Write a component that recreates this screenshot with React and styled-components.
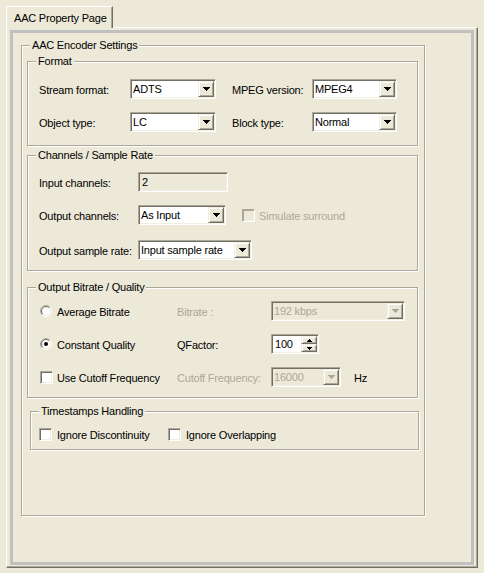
import React from 'react';
import styled, { createGlobalStyle, css } from 'styled-components';

const FACE = '#ECE9D8';
const LIGHT = '#F1EFE2';
const SHADOW = '#ACA899';
const DARK = '#716F64';
const DISABLED = '#ACA899';

const Global = createGlobalStyle`
  html, body { margin: 0; padding: 0; background: ${FACE}; }
  body { font-family: "Liberation Sans", Arial, sans-serif; font-size: 11px; letter-spacing: -0.2px; color: #000; }
  * { box-sizing: border-box; }
`;

const sunken = css`
  border: 1px solid;
  border-color: ${SHADOW} #ffffff #ffffff ${SHADOW};
  box-shadow: inset 1px 1px ${DARK}, inset -1px -1px ${LIGHT};
`;

const raised = css`
  border: 1px solid;
  border-color: ${LIGHT} ${DARK} ${DARK} ${LIGHT};
  box-shadow: inset 1px 1px #ffffff, inset -1px -1px ${SHADOW};
`;

const Page = styled.div`
  width: 484px;
  height: 573px;
  padding: 6px 0 0 6px;
`;

const TabStrip = styled.div`
  display: flex;
  height: 22px;
  margin-bottom: -1px;
  position: relative;
  z-index: 1;
`;

const Tab = styled.div`
  width: 107px;
  height: 22px;
  padding-left: 7px;
  display: flex;
  align-items: center;
  background: ${FACE};
  border-left: 1px solid #ffffff;
  border-top: 1px solid #ffffff;
  border-right: 1px solid ${DARK};
  box-shadow: inset -1px 0 ${SHADOW};
  white-space: nowrap;
`;

const Panel = styled.div`
  width: 472px;
  height: 541px;
  display: flex;
  flex-direction: column;
  border-style: solid;
  border-width: 1px;
  border-color: #ffffff ${DARK} ${DARK} #ffffff;
  box-shadow: inset -1px -1px ${SHADOW};
  padding: 2px 3px 2px 3px;
`;

const Frame = styled.div`
  flex: 1;
  border: 3px solid #c0c0c0;
  padding: 12px 0 0 8px;
`;

const GroupBox = styled.div`
  position: relative;
  flex: none;
  height: ${(p) => p.$h}px;
  margin: ${(p) => p.$m || '0'};
  padding: ${(p) => p.$pad || '0'};
  border: 1px solid ${SHADOW};
  box-shadow: inset 1px 1px #ffffff, 1px 1px #ffffff;
  display: flex;
  flex-direction: column;
  gap: ${(p) => p.$gap || 0}px;
`;

const MainGroup = styled(GroupBox)`
  width: 404px;
`;

const Caption = styled.span`
  position: absolute;
  top: -7px;
  left: 8px;
  padding: 0 2px;
  line-height: 13px;
  background: ${FACE};
  white-space: nowrap;
`;

const Row = styled.div`
  display: flex;
  align-items: center;
  height: ${(p) => p.$h || 20}px;
  margin-top: ${(p) => p.$mt || 0}px;
`;

const Label = styled.span`
  flex: none;
  width: ${(p) => (p.$w ? `${p.$w}px` : 'auto')};
  margin-left: ${(p) => p.$ml || 0}px;
  padding-top: 1px;
  color: ${(p) => (p.$disabled ? DISABLED : '#000')};
  white-space: nowrap;
`;

const Box = styled.div`
  flex: none;
  width: ${(p) => p.$w}px;
  height: 20px;
  display: flex;
  align-items: stretch;
  padding: 1px;
  ${sunken};
  background: ${(p) => (p.$face ? FACE : '#ffffff')};
  color: ${(p) => (p.$disabled ? DISABLED : '#000')};
`;

const BoxText = styled.span`
  flex: 1;
  display: flex;
  align-items: center;
  padding-left: ${(p) => p.$pl || 1}px;
  white-space: nowrap;
  overflow: hidden;
`;

const DropButton = styled.div`
  flex: none;
  width: 16px;
  ${raised};
  background: ${FACE};
  display: flex;
  align-items: center;
  justify-content: center;
  color: ${(p) => (p.$disabled ? DISABLED : '#000')};
`;

const SpinColumn = styled.div`
  flex: none;
  width: 16px;
  display: flex;
  flex-direction: column;
`;

const SpinButton = styled.div`
  flex: 1;
  ${raised};
  background: ${FACE};
  display: flex;
  align-items: center;
  justify-content: center;
`;

const Check = styled.span`
  flex: none;
  width: 13px;
  height: 13px;
  ${sunken};
  background: ${(p) => (p.$disabled ? FACE : '#ffffff')};
  ${(p) =>
    p.$disabled &&
    css`
      border-color: ${SHADOW} #ffffff #ffffff ${SHADOW};
      box-shadow: inset 1px 1px ${SHADOW}, inset -1px -1px ${LIGHT};
    `}
`;

const Option = styled.label`
  flex: none;
  display: flex;
  align-items: center;
  gap: ${(p) => p.$gap || 4}px;
  width: ${(p) => (p.$w ? `${p.$w}px` : 'auto')};
  margin-left: ${(p) => p.$ml || 0}px;
  color: ${(p) => (p.$disabled ? DISABLED : '#000')};
  white-space: nowrap;
`;

const OptionText = styled.span`
  padding-top: 1px;
`;

const DownArrow = () => (
  <svg width="7" height="4" viewBox="0 0 7 4" shapeRendering="crispEdges" fill="currentColor">
    <path d="M0 0h7v1H0zM1 1h5v1H1zM2 2h3v1H2zM3 3h1v1H3z" />
  </svg>
);

const SmallArrow = ({ up }) => (
  <svg width="5" height="3" viewBox="0 0 5 3" shapeRendering="crispEdges" fill="#000">
    {up ? <path d="M2 0h1v1H2zM1 1h3v1H1zM0 2h5v1H0z" /> : <path d="M0 0h5v1H0zM1 1h3v1H1zM2 2h1v1H2z" />}
  </svg>
);

const Radio = ({ checked }) => {
  const r1 = 5.5;
  const r2 = 4.5;
  const k = Math.SQRT1_2;
  const arc = (r, tl) => {
    const x1 = 6 - r * k;
    const y1 = 6 + r * k;
    const x2 = 6 + r * k;
    const y2 = 6 - r * k;
    return tl ? `M${x1} ${y1}A${r} ${r} 0 0 1 ${x2} ${y2}` : `M${x2} ${y2}A${r} ${r} 0 0 1 ${x1} ${y1}`;
  };
  return (
    <svg width="12" height="12" viewBox="0 0 12 12" style={{ flex: 'none' }}>
      <circle cx="6" cy="6" r="4" fill="#fff" />
      <path d={arc(r1, true)} stroke={SHADOW} fill="none" />
      <path d={arc(r1, false)} stroke="#fff" fill="none" />
      <path d={arc(r2, true)} stroke={DARK} fill="none" />
      <path d={arc(r2, false)} stroke={LIGHT} fill="none" />
      {checked && <circle cx="6" cy="6" r="2" fill="#000" />}
    </svg>
  );
};

const Combo = ({ w, value, disabled }) => (
  <Box $w={w} $face={disabled} $disabled={disabled}>
    <BoxText>{value}</BoxText>
    <DropButton $disabled={disabled}>
      <DownArrow />
    </DropButton>
  </Box>
);

const Spin = ({ w, value }) => (
  <Box $w={w}>
    <BoxText $pl={2}>{value}</BoxText>
    <SpinColumn>
      <SpinButton>
        <SmallArrow up />
      </SpinButton>
      <SpinButton>
        <SmallArrow />
      </SpinButton>
    </SpinColumn>
  </Box>
);

export default function App() {
  return (
    <>
      <Global />
      <Page>
        <TabStrip>
          <Tab>AAC Property Page</Tab>
        </TabStrip>
        <Panel>
          <Frame>
            <MainGroup $h={471} $pad="15px 6px 0 5px">
              <Caption>AAC Encoder Settings</Caption>

              <GroupBox $h={85} $pad="17px 0 0 11px" $gap={13}>
                <Caption>Format</Caption>
                <Row>
                  <Label $w={91}>Stream format:</Label>
                  <Combo w={86} value="ADTS" />
                  <Label $w={80} $ml={16}>MPEG version:</Label>
                  <Combo w={85} value="MPEG4" />
                </Row>
                <Row>
                  <Label $w={91}>Object type:</Label>
                  <Combo w={86} value="LC" />
                  <Label $w={80} $ml={16}>Block type:</Label>
                  <Combo w={85} value="Normal" />
                </Row>
              </GroupBox>

              <GroupBox $h={116} $m="9px 0 0 0" $pad="16px 0 0 11px">
                <Caption>Channels / Sample Rate</Caption>
                <Row>
                  <Label $w={99}>Input channels:</Label>
                  <Box $w={90} $face>
                    <BoxText $pl={2}>2</BoxText>
                  </Box>
                </Row>
                <Row $mt={13}>
                  <Label $w={99}>Output channels:</Label>
                  <Combo w={88} value="As Input" />
                  <Option $ml={16} $disabled>
                    <Check $disabled />
                    <OptionText>Simulate surround</OptionText>
                  </Option>
                </Row>
                <Row $mt={15}>
                  <Label $w={99}>Output sample rate:</Label>
                  <Combo w={114} value="Input sample rate" />
                </Row>
              </GroupBox>

              <GroupBox $h={111} $m="16px 0 0 0" $pad="13px 0 0 12px" $gap={13}>
                <Caption>Output Bitrate / Quality</Caption>
                <Row>
                  <Option $w={137} $gap={5}>
                    <Radio />
                    <OptionText>Average Bitrate</OptionText>
                  </Option>
                  <Label $w={94} $disabled>Bitrate :</Label>
                  <Combo w={134} value="192 kbps" disabled />
                </Row>
                <Row>
                  <Option $w={137} $gap={5}>
                    <Radio checked />
                    <OptionText>Constant Quality</OptionText>
                  </Option>
                  <Label $w={94}>QFactor:</Label>
                  <Spin w={48} value="100" />
                </Row>
                <Row>
                  <Option $w={137}>
                    <Check />
                    <OptionText>Use Cutoff Frequency</OptionText>
                  </Option>
                  <Label $w={94} $disabled>Cutoff Frequency:</Label>
                  <Combo w={70} value="16000" disabled />
                  <Label $ml={13}>Hz</Label>
                </Row>
              </GroupBox>

              <GroupBox $h={39} $m="13px -1px 0 3px" $pad="16px 0 0 8px">
                <Caption>Timestamps Handling</Caption>
                <Row $h={13}>
                  <Option $w={129} $gap={5}>
                    <Check />
                    <OptionText>Ignore Discontinuity</OptionText>
                  </Option>
                  <Option $gap={5}>
                    <Check />
                    <OptionText>Ignore Overlapping</OptionText>
                  </Option>
                </Row>
              </GroupBox>
            </MainGroup>
          </Frame>
        </Panel>
      </Page>
    </>
  );
}
